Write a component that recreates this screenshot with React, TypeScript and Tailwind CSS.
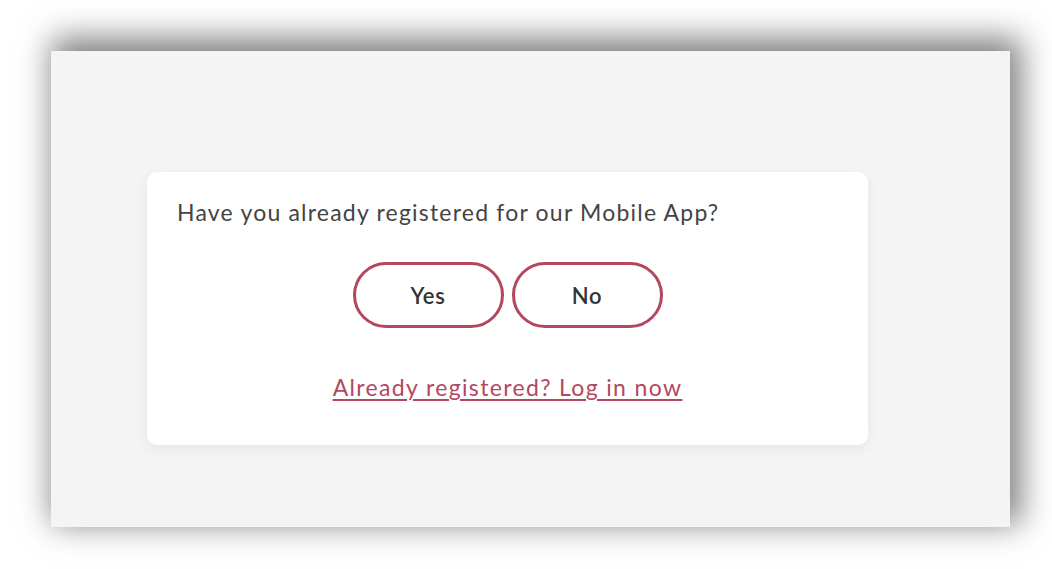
import React from 'react';

const App: React.FC = () => {
  return (
    <div className="w-[1052px] h-[569px] bg-white pt-[51px] pl-[51px] overflow-hidden" style={{ fontFamily: 'Lato, "Noto Sans", sans-serif' }}>
      {/* outer panel */}
      <div className="w-[959px] h-[476px] bg-[#f4f4f4] pt-[121px] pl-[96px] shadow-[6px_-8px_30px_5px_rgba(0,0,0,0.5)]">
        {/* dialog card */}
        <div className="w-[721px] h-[273px] bg-white rounded-[10px] shadow-[0_4px_14px_rgba(0,0,0,0.06)] px-[30px] pt-[25px]">
          <p className="text-[23px] leading-[30px] tracking-[1.2px] text-[#444444] whitespace-nowrap">
            Have you already registered for our Mobile App?
          </p>

          <div className="flex justify-center gap-[8px] mt-[35px]">
            <button className="w-[151px] h-[66px] rounded-[33px] border-[3px] border-[#b4475e] bg-white text-[22px] tracking-[0.8px] font-semibold text-[#333333]">
              Yes
            </button>
            <button className="w-[151px] h-[66px] rounded-[33px] border-[3px] border-[#b4475e] bg-white text-[22px] tracking-[0.8px] font-semibold text-[#333333]">
              No
            </button>
          </div>

          <div className="text-center mt-[44px]">
            <a href="#" className="text-[23px] leading-[30px] tracking-[1.35px] text-[#b4475e] underline underline-offset-[3px] whitespace-nowrap">
              Already registered? Log in now
            </a>
          </div>
        </div>
      </div>
    </div>
  );
};

export default App;
